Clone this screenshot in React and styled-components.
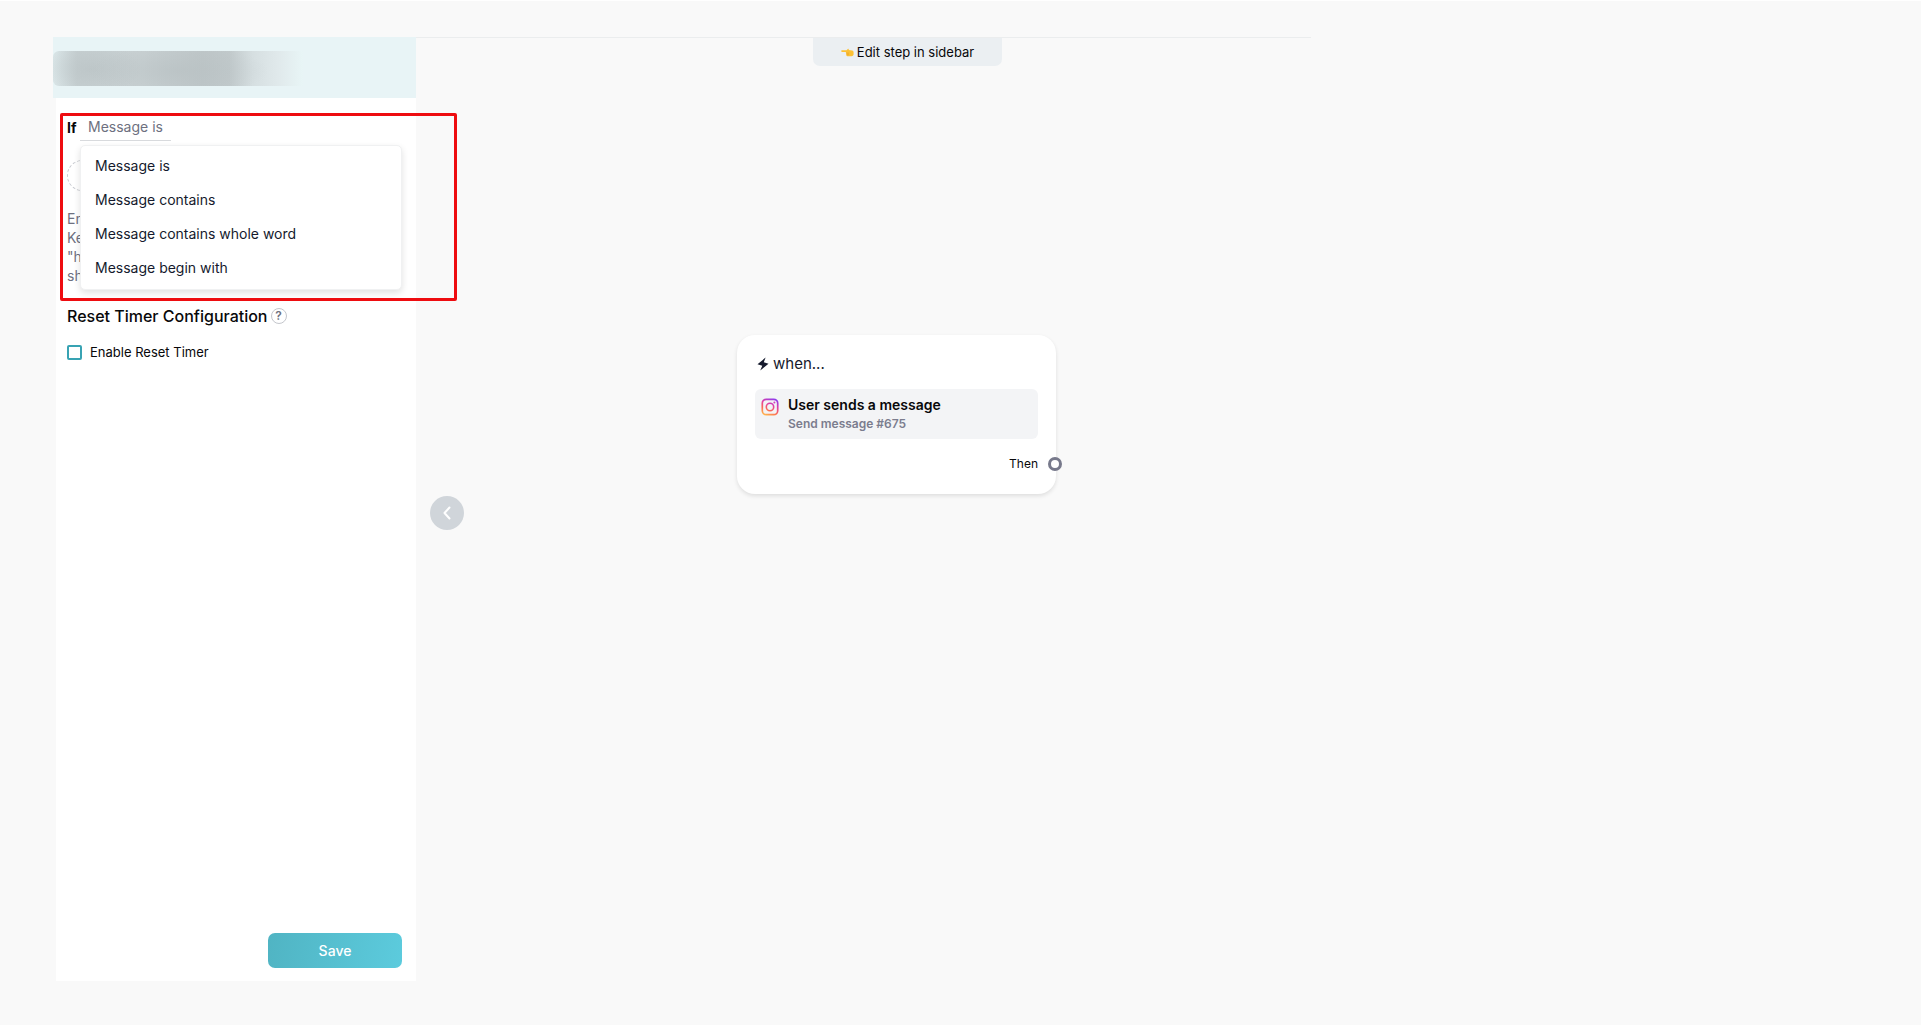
import React, { useState } from 'react';
import styled, { createGlobalStyle } from 'styled-components';

const GlobalStyle = createGlobalStyle`
  * {
    box-sizing: border-box;
  }
  body {
    margin: 0;
    background: #f9f9f9;
    color: #08080a;
    font-family: Inter, "Open Sans", sans-serif;
    font-size: 14px;
  }
  button, input {
    font: inherit;
    color: inherit;
  }
`

//Layout
const Page = styled.div`
  display: flex;
  min-height: 100vh;
  padding: 36px 0 44px 53px;
  border-top: 1px #ffffff solid;
`
const Sidebar = styled.aside`
  display: flex;
  flex-direction: column;
  flex: 0 0 363px;
`
const SidebarHeader = styled.header`
  height: 61px;
  padding-top: 14px;
  background: #e8f4f6;
`
const HiddenName = styled.div`
  width: 250px;
  height: 35px;
  border-radius: 6px 0 0 6px;
  background:
    radial-gradient(ellipse 90px 26px at 125px 20px, #b6bfc188, #b6bfc100),
    radial-gradient(ellipse 50px 26px at 38px 18px, #b6bfc188, #b6bfc100),
    linear-gradient(90deg, #dbe7e9 0, #c6cfd1 24px, #c8d0d2 90px, #bec6c8 150px, #c1c9cb 176px, #d6dfe1 200px, #e0e9eb 225px, #e8f5f6 250px);
`
const SidebarBody = styled.form`
  display: flex;
  flex-direction: column;
  flex: 1;
  margin-left: 3px;
  padding: 15px 14px 13px 11px;
  background: #ffffff;
`

//Condition
const Condition = styled.section`
  position: relative;
  height: 188px;
`
const Highlight = styled.div`
  position: absolute;
  top: 0;
  left: -7px;
  width: 397px;
  height: 188px;
  border: 3px #ee0c10 solid;
  border-radius: 2px;
  pointer-events: none;
`
const ConditionRow = styled.div`
  display: flex;
  align-items: flex-start;
  gap: 4px;
`
const IfLabel = styled.span`
  width: 9px;
  padding-top: 5px;
  font-weight: 700;
  line-height: 20px;
`
const Trigger = styled.button`
  height: 28px;
  padding: 0 8px;
  border: 0;
  border-bottom: 1px #d8dadd solid;
  background: none;
  color: #6d7080;
  line-height: 20px;
  cursor: pointer;
`
const Menu = styled.ul`
  position: absolute;
  top: 32px;
  left: 13px;
  width: 322px;
  margin: 0;
  padding: 2px 0 5px;
  list-style: none;
  border: 1px #f0f1f2 solid;
  border-radius: 5px;
  background: #ffffff;
  box-shadow: 0 3px 7px #0000001f;
`
const MenuItem = styled.button`
  display: block;
  width: 100%;
  height: 34px;
  padding: 0 14px;
  border: 0;
  background: none;
  color: #151a2d;
  text-align: left;
  cursor: pointer;
`
const KeywordPill = styled.div`
  width: 110px;
  height: 31px;
  margin: 19px 0 18px;
  border: 1px #c9cbd1 dashed;
  border-radius: 16px;
`
const Hint = styled.p`
  margin: 0;
  color: #6d7080;
  line-height: 19px;
`
const HintLine = styled.span`
  display: block;
`

//Reset timer
const SectionTitle = styled.h2`
  display: flex;
  align-items: center;
  gap: 3px;
  margin: 3px 0 14px;
  font-size: 16px;
  font-weight: 500;
  line-height: 24px;
  white-space: nowrap;
`
const HelpButton = styled.button`
  width: 16px;
  height: 16px;
  padding: 0;
  border: 1px #c4c6cc solid;
  border-radius: 50%;
  background: #ffffff;
  color: #6d7080;
  font-size: 12px;
  font-weight: 600;
  line-height: 14px;
`
const CheckLabel = styled.label`
  display: flex;
  align-items: center;
  gap: 8px;
  font-size: 13px;
  line-height: 20px;
`
const Checkbox = styled.input`
  appearance: none;
  width: 15px;
  height: 15px;
  margin: 0;
  border: 2px #38a3b3 solid;
  border-radius: 2px;
  background: #ffffff;
  &:checked {
    background: #38a3b3;
  }
`
const SaveButton = styled.button`
  align-self: flex-end;
  width: 134px;
  height: 35px;
  margin-top: auto;
  border: 0;
  border-radius: 7px;
  background: linear-gradient(100deg, #50b4c3, #5ccbdd);
  color: #ffffff;
  font-size: 14px;
  font-weight: 500;
  cursor: pointer;
`

//Canvas
const Canvas = styled.main`
  position: relative;
  flex: 1;
  max-width: 895px;
  border-top: 1px #ebedee solid;
`
const CollapseButton = styled.button`
  position: absolute;
  top: calc(50% - 14px);
  left: 14px;
  display: grid;
  place-items: center;
  width: 34px;
  height: 34px;
  padding: 0;
  border: 0;
  border-radius: 50%;
  background: #d0d5da;
  cursor: pointer;
`
const StepBadge = styled.div`
  position: absolute;
  top: 0;
  left: 397px;
  display: flex;
  align-items: center;
  justify-content: center;
  gap: 3px;
  width: 189px;
  height: 28px;
  border-radius: 0 0 7px 7px;
  background: #ebeff2;
  font-size: 13px;
`
const Node = styled.article`
  position: absolute;
  top: 297px;
  left: 321px;
  width: 319px;
  height: 159px;
  padding: 17px 18px;
  border-radius: 18px;
  background: #ffffff;
  box-shadow: 0 2px 4px #0000001c;
`
const NodeTitle = styled.h3`
  display: flex;
  align-items: center;
  gap: 4px;
  margin: 0 0 13px;
  padding-left: 2px;
  color: #151a2d;
  font-size: 15px;
  font-weight: 400;
  line-height: 24px;
`
const TriggerCard = styled.div`
  display: flex;
  gap: 9px;
  height: 50px;
  padding: 6px;
  border-radius: 6px;
  background: #f3f4f6;
`
const InstagramIcon = styled.svg`
  margin-top: 3px;
`
const TriggerName = styled.div`
  font-weight: 600;
  line-height: 20px;
`
const TriggerMeta = styled.div`
  color: #7b7d8e;
  font-size: 12px;
  font-weight: 600;
  line-height: 18px;
`
const NextRow = styled.div`
  display: flex;
  align-items: center;
  justify-content: flex-end;
  gap: 10px;
  margin: 15px -24px 0 0;
  font-size: 12px;
  line-height: 20px;
`
const Handle = styled.span`
  width: 14px;
  height: 14px;
  border: 3px #77798b solid;
  border-radius: 50%;
  background: #ffffff;
`
// <-- Styles

const options = [
  'Message is',
  'Message contains',
  'Message contains whole word',
  'Message begin with',
];

const hintLines = ['En', 'Ke', '"h', 'sh'];

const ConditionPicker = () => {
  const [ selected, setSelected ] = useState(options[0]);
  const [ open, setOpen ] = useState(true);

  const choose = (option) => {
    setSelected(option);
    setOpen(false);
  }

  return (
    <Condition>
      <ConditionRow>
        <IfLabel>If</IfLabel>
        <Trigger type="button" aria-expanded={open} onClick={() => setOpen(!open)}>{selected}</Trigger>
      </ConditionRow>
      <KeywordPill />
      <Hint>
        {hintLines.map(line => <HintLine key={line}>{line}</HintLine>)}
      </Hint>
      {open && (
        <Menu>
          {options.map(option => (
            <li key={option}>
              <MenuItem type="button" onClick={() => choose(option)}>{option}</MenuItem>
            </li>
          ))}
        </Menu>
      )}
      <Highlight />
    </Condition>
  );
};

const TriggerNode = () => (
  <Node>
    <NodeTitle>
      <svg width="12" height="14" viewBox="0 0 12 14" fill="#151a2d">
        <path d="M8.6.6.5 7.2l4.800 1.500-2.100 4.800L11.500 6.700 6.800 5.300z" />
      </svg>
      when...
    </NodeTitle>
    <TriggerCard>
      <InstagramIcon width="18" height="18" viewBox="0 0 18 18" fill="none">
        <defs>
          <linearGradient id="insta" x1="4" y1="18" x2="12" y2="0" gradientUnits="userSpaceOnUse">
            <stop offset="0" stopColor="#ffc04d" />
            <stop offset=".35" stopColor="#fb6a55" />
            <stop offset=".65" stopColor="#e03ea6" />
            <stop offset="1" stopColor="#8a3bee" />
          </linearGradient>
        </defs>
        <rect x="1.3" y="1.3" width="15.4" height="15.4" rx="4" stroke="url(#insta)" strokeWidth="1.7" />
        <circle cx="9" cy="9" r="3.7" stroke="url(#insta)" strokeWidth="1.6" />
        <circle cx="13.4" cy="4.6" r="1" fill="#d13fc4" />
      </InstagramIcon>
      <div>
        <TriggerName>User sends a message</TriggerName>
        <TriggerMeta>Send message #675</TriggerMeta>
      </div>
    </TriggerCard>
    <NextRow>
      Then
      <Handle />
    </NextRow>
  </Node>
);

const App = () => (
  <>
    <GlobalStyle />
    <Page>
      <Sidebar>
        <SidebarHeader>
          <HiddenName />
        </SidebarHeader>
        <SidebarBody onSubmit={e => e.preventDefault()}>
          <ConditionPicker />
          <SectionTitle>
            Reset Timer Configuration
            <HelpButton type="button">?</HelpButton>
          </SectionTitle>
          <CheckLabel>
            <Checkbox type="checkbox" />
            Enable Reset Timer
          </CheckLabel>
          <SaveButton type="submit">Save</SaveButton>
        </SidebarBody>
      </Sidebar>
      <Canvas>
        <StepBadge>
          <svg width="13" height="9" viewBox="0 0 13 9">
            <path d="M.9 2.2h4.6L6.8.9c.5-.4 1.1-.1 1 .5l-.2.7 3.6.4c.9.2 1.4.9 1.4 2v1.6c0 1.3-.8 2.2-2.2 2.2H7.2c-1.2 0-1.9-.6-1.9-1.6 0-.6-.2-1-.1-1.5L4.7 3.9H.9C-.1 3.9-.1 2.2.9 2.2z" fill="#fcc135" />
            <path d="M5.3 5.2h2.6M5.6 6.7h2.3" stroke="#e89a24" strokeWidth=".6" />
          </svg>
          Edit step in sidebar
        </StepBadge>
        <TriggerNode />
        <CollapseButton type="button" aria-label="Collapse sidebar">
          <svg width="8" height="14" viewBox="0 0 8 14" fill="none" stroke="#ffffff" strokeWidth="2" strokeLinecap="round" strokeLinejoin="round">
            <path d="M6.5 1.5 1.5 7l5 5.500" />
          </svg>
        </CollapseButton>
      </Canvas>
    </Page>
  </>
);

export default App;
